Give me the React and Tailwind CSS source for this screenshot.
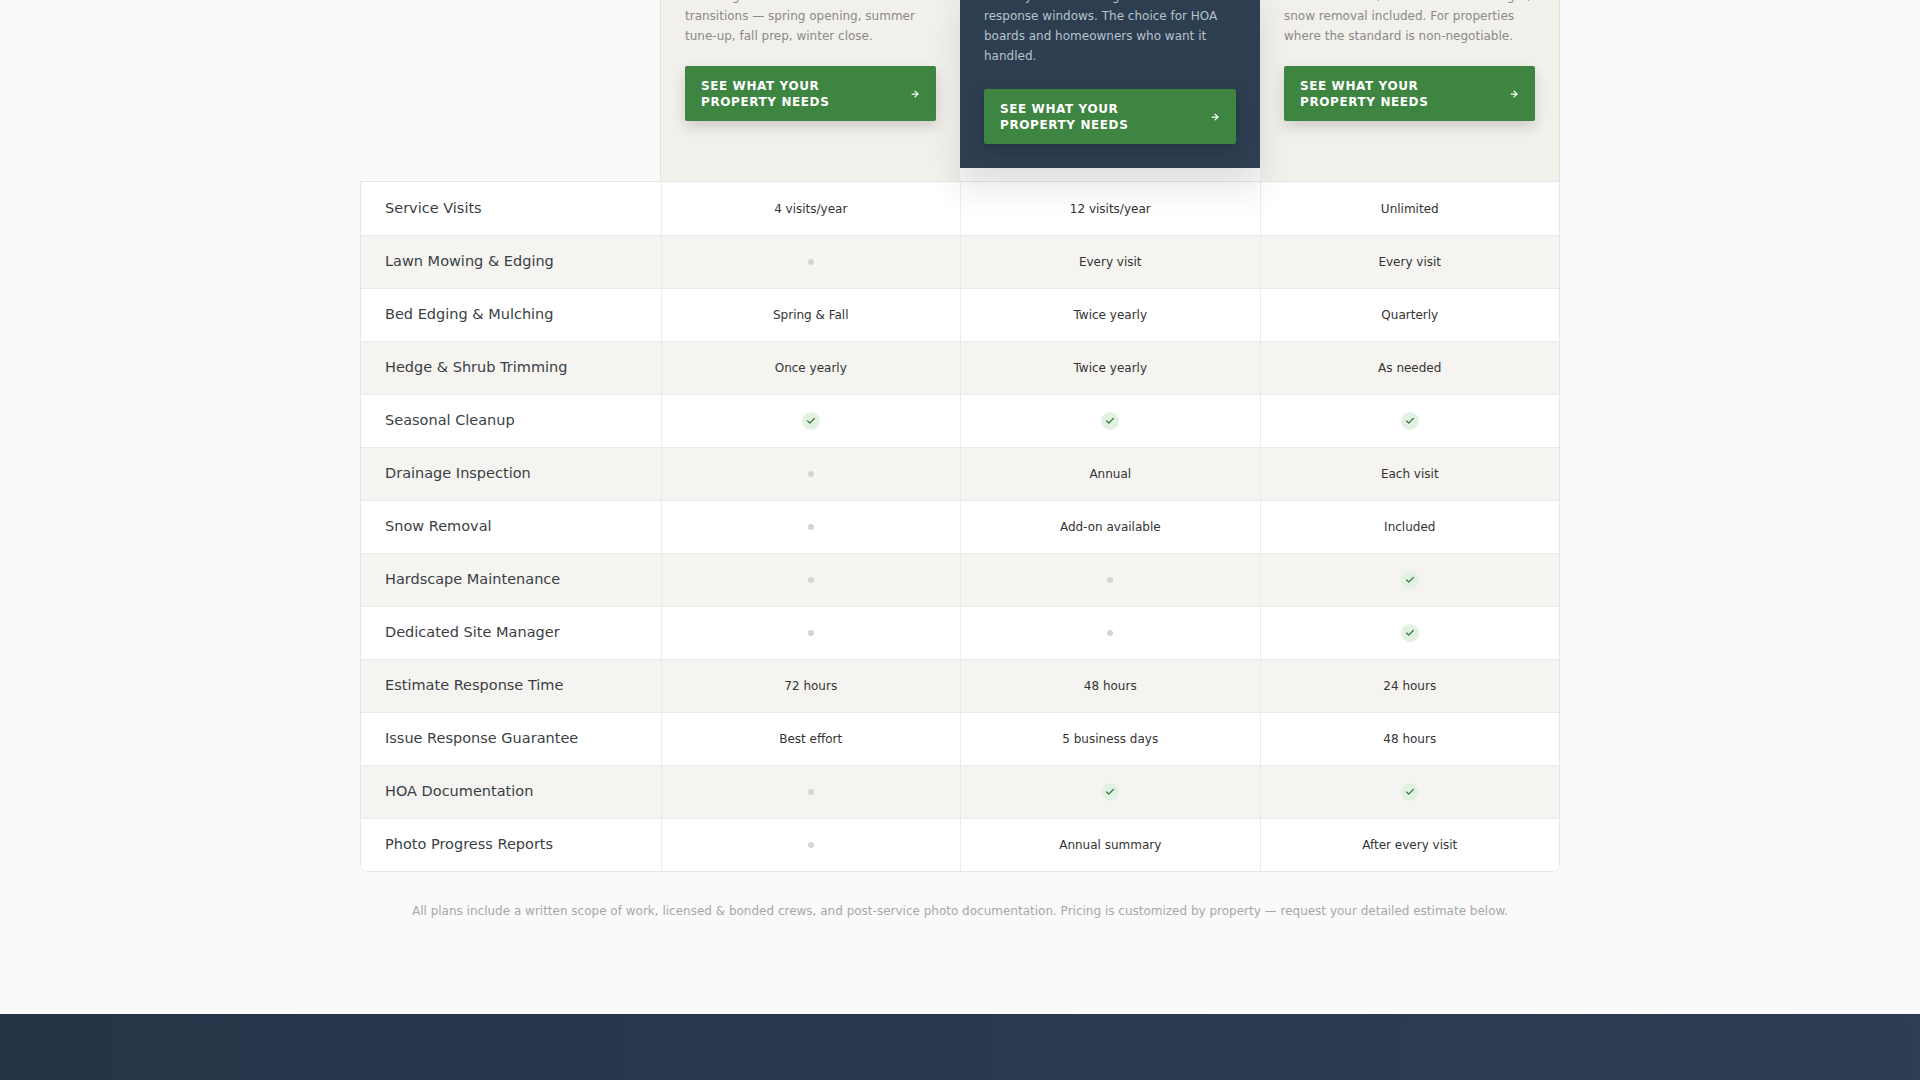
import { ArrowRight, Check } from 'lucide-react';

const rows = [
  ['Service Visits', '4 visits/year', '12 visits/year', 'Unlimited'],
  ['Lawn Mowing & Edging', null, 'Every visit', 'Every visit'],
  ['Bed Edging & Mulching', 'Spring & Fall', 'Twice yearly', 'Quarterly'],
  ['Hedge & Shrub Trimming', 'Once yearly', 'Twice yearly', 'As needed'],
  ['Seasonal Cleanup', true, true, true],
  ['Drainage Inspection', null, 'Annual', 'Each visit'],
  ['Snow Removal', null, 'Add-on available', 'Included'],
  ['Hardscape Maintenance', null, null, true],
  ['Dedicated Site Manager', null, null, true],
  ['Estimate Response Time', '72 hours', '48 hours', '24 hours'],
  ['Issue Response Guarantee', 'Best effort', '5 business days', '48 hours'],
  ['HOA Documentation', null, true, true],
  ['Photo Progress Reports', null, 'Annual summary', 'After every visit'],
];

const Cell = ({ v }) => {
  if (v === true)
    return (
      <span className="w-[18px] h-[18px] rounded-full bg-[#e3f1e2] flex items-center justify-center">
        <Check size={10} strokeWidth={3} className="text-[#2f7a34]" />
      </span>
    );
  if (v === null) return <span className="w-[6px] h-[6px] rounded-full bg-[#d4d4d4]" />;
  return <span className="text-[12px] text-[#333]">{v}</span>;
};

const Btn = () => (
  <a className="flex items-center justify-between gap-3 h-[55px] px-4 bg-[#3d8540] rounded-[2px] shadow-[0_6px_14px_rgba(0,0,0,0.15)] text-white text-[12px] font-bold uppercase tracking-[0.05em] leading-[16px]">
    <span>See what your property needs</span>
    <ArrowRight size={10} strokeWidth={3} className="shrink-0" />
  </a>
);

export default function App() {
  return (
    <div className="min-h-screen bg-[#fafafa] overflow-hidden" style={{ fontFamily: '"DejaVu Sans", sans-serif' }}>
      <div className="w-[1200px] mx-auto -mt-[14px]">
        <div className="grid grid-cols-4 items-start">
          <div />
          <div className="bg-[#f2f0eb] border-l border-[#e5e3de] h-[195px] px-6">
            <p className="text-[12px] leading-[20px] text-[#8a8a8a] mb-5">
              Four targeted visits that handle the transitions — spring opening, summer tune-up, fall prep, winter close.
            </p>
            <Btn />
          </div>
          <div className="bg-[#2c3e50] h-[182px] px-6 relative z-10 shadow-[0_20px_30px_rgba(30,40,60,0.12)]">
            <p className="text-[12px] leading-[20px] text-[#b8c2cc] mb-[23px]">
              Monthly service with guaranteed response windows. The choice for HOA boards and homeowners who want it handled.
            </p>
            <Btn />
          </div>
          <div className="bg-[#f2f0eb] border-r border-[#e5e3de] h-[195px] px-6">
            <p className="text-[12px] leading-[20px] text-[#8a8a8a] mb-5">
              Unlimited visits, dedicated site manager, snow removal included. For properties where the standard is non-negotiable.
            </p>
            <Btn />
          </div>
        </div>
        <div className="border border-[#e6e6e6] rounded-b-lg overflow-hidden bg-white">
          {rows.map((r, i) => (
            <div
              key={i}
              className={`grid grid-cols-4 h-[53px] ${i > 0 ? 'border-t border-[#ebebeb]' : ''} ${i % 2 ? 'bg-[#f5f4f1]' : 'bg-white'}`}
            >
              <div className="flex items-center px-6 text-[14.5px] text-[#3a3f45]">{r[0]}</div>
              {r.slice(1).map((v, j) => (
                <div key={j} className="flex items-center justify-center border-l border-[#ebebeb]">
                  <Cell v={v} />
                </div>
              ))}
            </div>
          ))}
        </div>
        <p className="text-center text-[12px] text-[#a8a8a8] mt-[30px]">
          All plans include a written scope of work, licensed &amp; bonded crews, and post-service photo documentation. Pricing is customized by property — request your detailed estimate below.
        </p>
      </div>
      <div className="mt-[94px] h-[80px] bg-gradient-to-r from-[#253447] to-[#2d3e54]" />
    </div>
  );
}
